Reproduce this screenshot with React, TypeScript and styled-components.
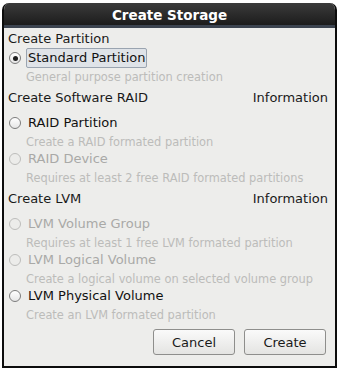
import React from 'react';
import styled, { createGlobalStyle } from 'styled-components';

const GlobalStyle = createGlobalStyle`
  html, body {
    margin: 0;
    padding: 0;
    background: #ffffff;
  }
  body {
    font-family: "DejaVu Sans", "Liberation Sans", sans-serif;
  }
`;

const Window = styled.div`
  margin: 3px 0 0 2px;
  width: 335px;
  height: 365px;
  box-sizing: border-box;
  display: flex;
  flex-direction: column;
  background: #ededeb;
  border: 2px solid #0c0c0c;
  border-top: none;
  border-radius: 7px 7px 0 0;
  overflow: hidden;
`;

const TitleBar = styled.div`
  height: 22px;
  background: linear-gradient(#3b3b3b, #1c1c1c);
  border-bottom: 3px solid #3c4450;
  color: #ffffff;
  font-weight: bold;
  font-size: 13.5px;
  line-height: 25px;
  text-align: center;
  margin: 0 -2px;
`;

const Body = styled.div`
  flex: 1;
  display: flex;
  flex-direction: column;
  padding: 1px 7px 0 4px;
`;

const Header = styled.div<{ $gap: number }>`
  display: flex;
  justify-content: space-between;
  height: 20px;
  line-height: 20px;
  font-size: 13px;
  color: #1a1a1a;
  margin-top: ${({ $gap }) => $gap}px;
  margin-bottom: ${({ $gap }) => ($gap ? 6 : 0)}px;
`;

const Option = styled.div<{ $disabled?: boolean }>`
  display: flex;
  align-items: center;
  height: 18px;
  padding-left: 1px;
  font-size: 13px;
  color: ${({ $disabled }) => ($disabled ? '#a9a9a7' : '#111111')};
`;

const Radio = styled.span<{ $checked?: boolean; $disabled?: boolean }>`
  position: relative;
  width: 12px;
  height: 12px;
  box-sizing: border-box;
  border-radius: 50%;
  border: 1px solid ${({ $disabled }) => ($disabled ? '#bdbdbb' : '#7c7c7c')};
  background: ${({ $disabled }) =>
    $disabled ? '#ececea' : 'linear-gradient(#ffffff, #e6e6e6)'};
  margin-right: 7px;
  flex-shrink: 0;

  &::after {
    content: '';
    display: ${({ $checked }) => ($checked ? 'block' : 'none')};
    position: absolute;
    left: 2.5px;
    top: 2.5px;
    width: 5px;
    height: 5px;
    border-radius: 50%;
    background: #1e1e1e;
  }
`;

const Label = styled.span<{ $focused?: boolean }>`
  display: inline-block;
  line-height: 18px;
  padding: 0 1px;
  margin-left: -2px;
  border: 1px solid ${({ $focused }) => ($focused ? '#9aa4b0' : 'transparent')};
  border-radius: 2px;
  background: ${({ $focused }) => ($focused ? '#dfe3e8' : 'transparent')};
`;

const Desc = styled.div`
  height: 16px;
  line-height: 16px;
  margin-top: 2px;
  padding-left: 18px;
  font-size: 11.4px;
  color: #bcbcba;
  white-space: nowrap;
`;

const Buttons = styled.div`
  display: flex;
  justify-content: flex-end;
  gap: 9px;
  margin-top: 6px;
  padding-right: 2px;
`;

const Button = styled.button`
  width: 82px;
  height: 26px;
  border: 1px solid #8e8e8c;
  border-radius: 3px;
  background: linear-gradient(#fafafa, #e4e4e2);
  font-family: "DejaVu Sans", "Liberation Sans", sans-serif;
  font-size: 13px;
  color: #1a1a1a;
  padding: 0;
`;

interface Item {
  label: string;
  desc: string;
  disabled?: boolean;
  checked?: boolean;
  focused?: boolean;
}

interface Section {
  title: string;
  info?: boolean;
  gap: number;
  items: Item[];
}

const sections: Section[] = [
  {
    title: 'Create Partition',
    gap: 0,
    items: [
      { label: 'Standard Partition', desc: 'General purpose partition creation', checked: true, focused: true },
    ],
  },
  {
    title: 'Create Software RAID',
    info: true,
    gap: 3,
    items: [
      { label: 'RAID Partition', desc: 'Create a RAID formated partition' },
      { label: 'RAID Device', desc: 'Requires at least 2 free RAID formated partitions', disabled: true },
    ],
  },
  {
    title: 'Create LVM',
    info: true,
    gap: 3,
    items: [
      { label: 'LVM Volume Group', desc: 'Requires at least 1 free LVM formated partition', disabled: true },
      { label: 'LVM Logical Volume', desc: 'Create a logical volume on selected volume group', disabled: true },
      { label: 'LVM Physical Volume', desc: 'Create an LVM formated partition' },
    ],
  },
];

export default function App() {
  return (
    <>
      <GlobalStyle />
      <Window>
        <TitleBar>Create Storage</TitleBar>
        <Body>
          {sections.map(section => (
            <React.Fragment key={section.title}>
              <Header $gap={section.gap}>
                <span>{section.title}</span>
                {section.info && <span>Information</span>}
              </Header>
              {section.items.map(item => (
                <React.Fragment key={item.label}>
                  <Option $disabled={item.disabled}>
                    <Radio $checked={item.checked} $disabled={item.disabled} />
                    <Label $focused={item.focused}>{item.label}</Label>
                  </Option>
                  <Desc>{item.desc}</Desc>
                </React.Fragment>
              ))}
            </React.Fragment>
          ))}
          <Buttons>
            <Button>Cancel</Button>
            <Button>Create</Button>
          </Buttons>
        </Body>
      </Window>
    </>
  );
}
